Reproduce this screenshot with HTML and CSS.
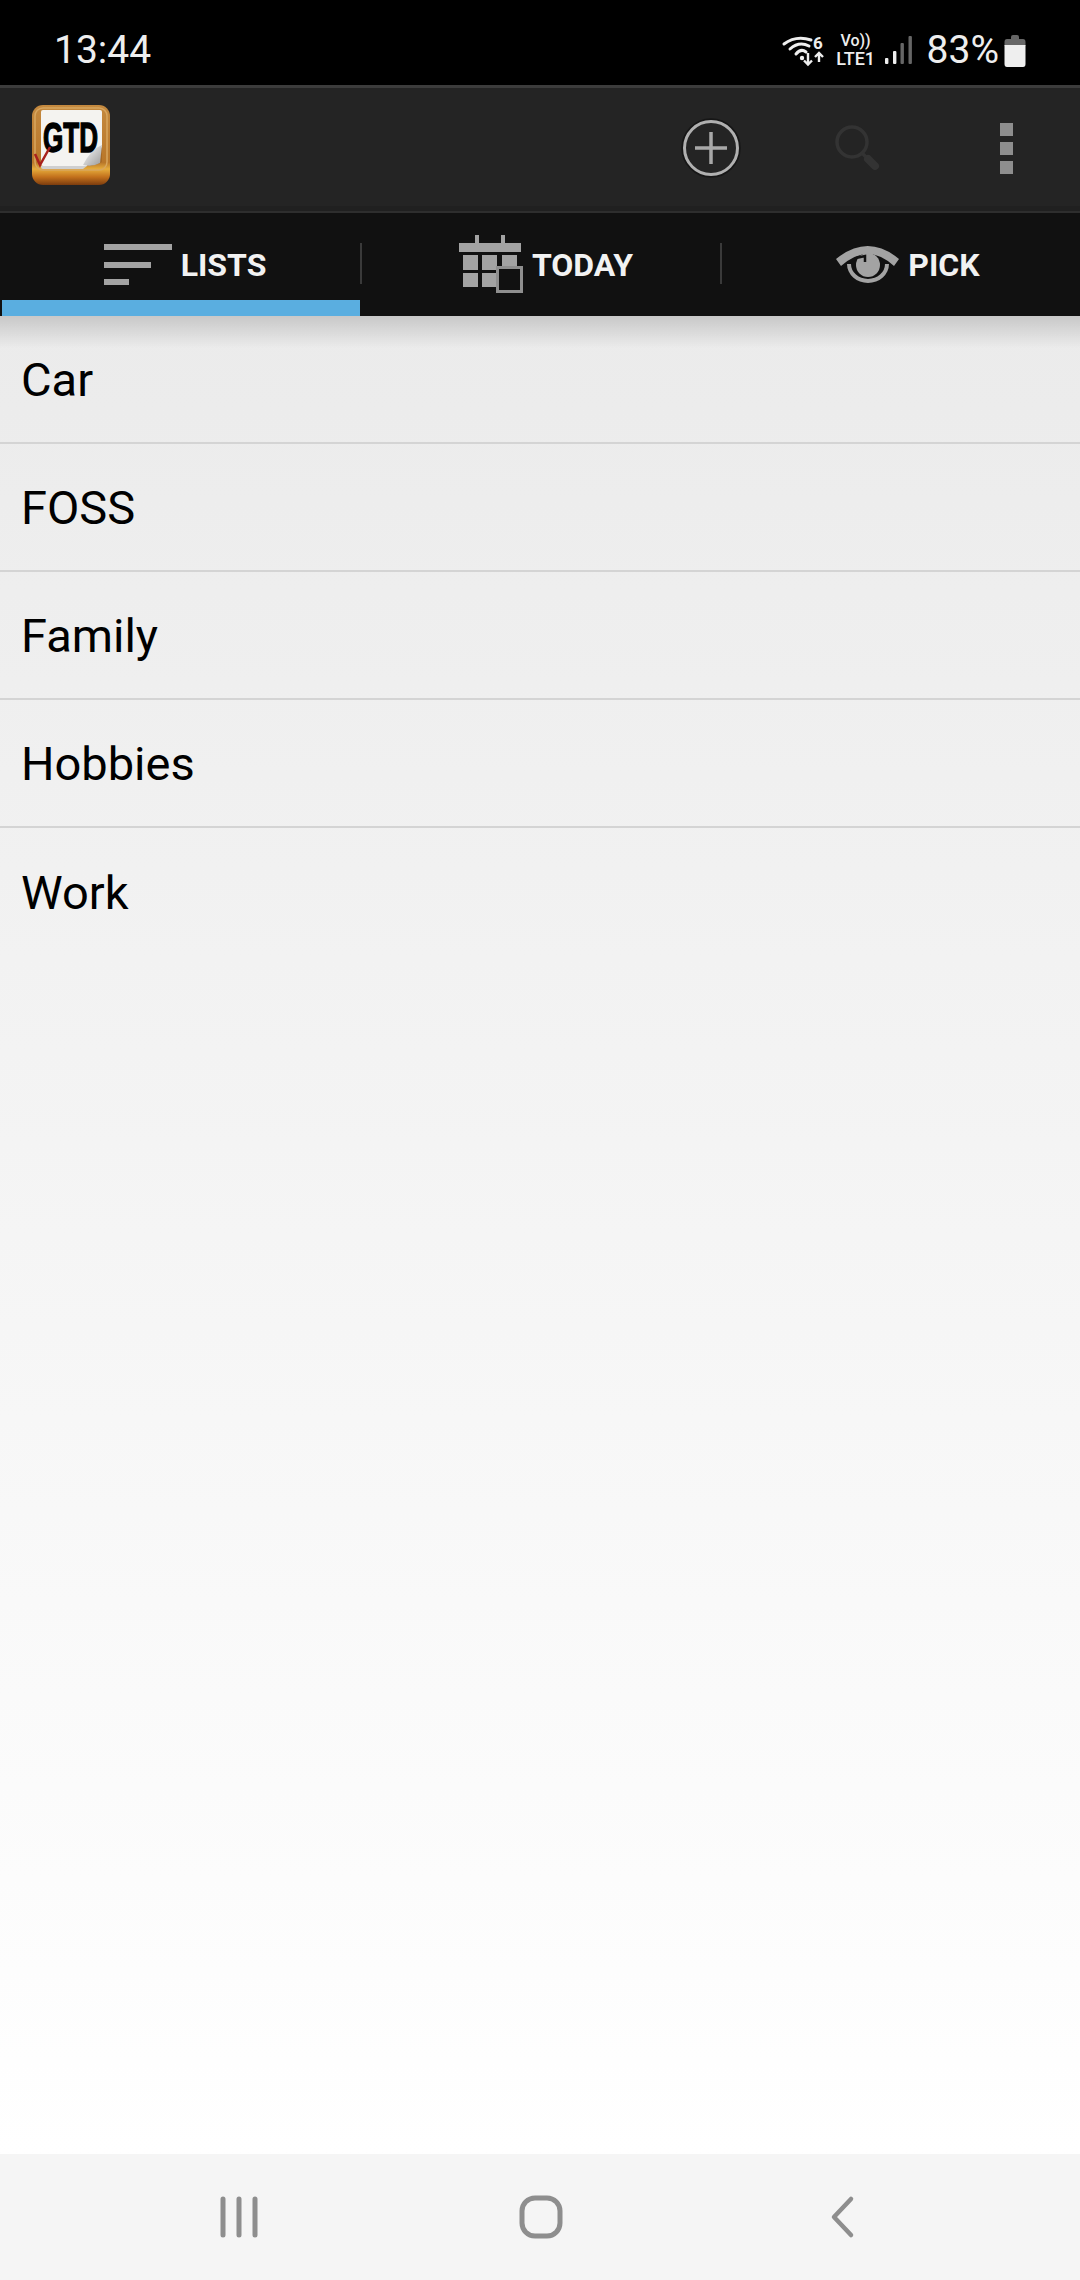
FILE: index.html
```html
<!DOCTYPE html>
<html lang="en">
<head>
    <meta charset="UTF-8">
    <meta name="viewport" content="width=device-width, initial-scale=1.0">
    <title>GTD Lists</title>
    <link rel="stylesheet" href="styles.css">
</head>
<body>
    <div class="status-bar">
        <span class="clock">13:44</span>
        <div class="status-icons">
            <svg class="wifi" width="42" height="31" viewBox="0 0 42 31">
                <path d="M2 9Q14 0 29 5" fill="none" stroke="#eee" stroke-width="3" stroke-linecap="round"/>
                <path d="M8 14Q17 6 27 11" fill="none" stroke="#eee" stroke-width="3" stroke-linecap="round"/>
                <path d="M14 19Q19 13 24 17" fill="none" stroke="#eee" stroke-width="3" stroke-linecap="round"/>
                <circle cx="20" cy="23" r="2.200" fill="#eee"/>
                <text x="31" y="14" class="wifi-six">6</text>
                <path d="M26 18V29M22 25.500L26 29.500L30 25.500" fill="none" stroke="#eee" stroke-width="2.400"/>
                <path d="M37 27V18M33 22L37 18L41 22" fill="none" stroke="#eee" stroke-width="2.400"/>
            </svg>
            <div class="volte">
                <span class="vo">Vo))</span>
                <span class="lte">LTE1</span>
            </div>
            <svg class="signal" width="29" height="30" viewBox="0 0 29 30">
                <rect x="1" y="23" width="3.400" height="6" rx="1" fill="#eee"/>
                <rect x="9" y="16" width="3.400" height="13" rx="1" fill="#eee"/>
                <rect x="16.500" y="8" width="3.400" height="21" rx="1" fill="#666"/>
                <rect x="24.500" y="1" width="3.400" height="28" rx="1" fill="#666"/>
            </svg>
            <span class="battery-text">83%</span>
            <svg class="battery" width="22" height="33" viewBox="0 0 22 33">
                <path d="M7 3Q7 1 9 1H13Q15 1 15 3V5H19Q21.500 5 21.500 8V12H0.500V8Q0.500 5 3 5H7Z" fill="#666"/>
                <path d="M0.500 11H21.500V30Q21.500 33 19 33H3Q0.500 33 0.500 30Z" fill="#eee"/>
            </svg>
        </div>
    </div>

    <div class="app-bar">
        <svg class="logo" width="80" height="82" viewBox="0 0 80 82">
            <defs>
                <linearGradient id="wood" x1="0" y1="0" x2="0" y2="1">
                    <stop offset="0" stop-color="#c4893f"/>
                    <stop offset="0.72" stop-color="#b9772a"/>
                    <stop offset="0.8" stop-color="#e6ad3c"/>
                    <stop offset="0.9" stop-color="#c2701c"/>
                    <stop offset="1" stop-color="#7c3c0e"/>
                </linearGradient>
                <linearGradient id="curl" x1="0" y1="0" x2="1" y2="1">
                    <stop offset="0" stop-color="#fff"/>
                    <stop offset="1" stop-color="#9a9a9a"/>
                </linearGradient>
            </defs>
            <rect x="1" y="0" width="78" height="80" rx="11" fill="url(#wood)"/>
            <rect x="4" y="3" width="72" height="62" rx="8" fill="none" stroke="#d8a65f" stroke-width="1.500"/>
            <path d="M10 7Q10 5 12 5H69Q71 5 71 7V42L56 61H12Q10 61 10 59Z" fill="#f4f3f0"/>
            <path d="M10 61H56L52 64H12Q10 64 10 62Z" fill="#cfcfcf"/>
            <path d="M71 42L56 61Q66 60 71 57Z" fill="#a86a24"/>
            <path d="M71 40Q60 44 52 60Q62 62 69 58Z" fill="url(#curl)"/>
            <text transform="translate(39.500 47) scale(0.62 1)" class="logo-text">GTD</text>
            <path d="M4 49L9 60L19 42" fill="none" stroke="#a8201c" stroke-width="2.500"/>
        </svg>
        <div class="actions">
            <svg width="60" height="60" viewBox="0 0 60 60">
                <circle cx="30" cy="30" r="28.500" fill="none" stroke="#161616" stroke-width="2.500"/>
                <circle cx="30" cy="30" r="26.500" fill="none" stroke="#b0b0b0" stroke-width="3"/>
                <path d="M30 14V46M14 30H46" stroke="#a8a8a8" stroke-width="3.500"/>
            </svg>
            <svg class="search" width="56" height="56" viewBox="0 0 56 56">
                <circle cx="21" cy="20" r="15" fill="none" stroke="#333" stroke-width="3.500"/>
                <path d="M31 31L36 36" stroke="#333" stroke-width="3.500"/>
                <path d="M37 37L44 44" stroke="#333" stroke-width="8" stroke-linecap="round"/>
            </svg>
            <div class="overflow">
                <span></span>
                <span></span>
                <span></span>
            </div>
        </div>
    </div>
    <div class="app-bar-line"></div>

    <div class="tabs">
        <div class="tab tab-lists">
            <svg width="68" height="41" viewBox="0 0 68 41">
                <rect x="0" y="0" width="68" height="6" fill="#a3a3a3"/>
                <rect x="0" y="18" width="47" height="6" fill="#a3a3a3"/>
                <rect x="0" y="35" width="25" height="6" fill="#a3a3a3"/>
            </svg>
            <span>LISTS</span>
        </div>
        <div class="tab tab-today">
            <svg width="64" height="59" viewBox="0 0 64 59">
                <rect x="0" y="8" width="62" height="9" fill="#a3a3a3"/>
                <rect x="16" y="0" width="4" height="8" fill="#a3a3a3"/>
                <rect x="42" y="0" width="4" height="8" fill="#a3a3a3"/>
                <rect x="4" y="20" width="15" height="15" fill="#a3a3a3"/>
                <rect x="23" y="20" width="15" height="15" fill="#a3a3a3"/>
                <rect x="43" y="20" width="15" height="15" fill="#a3a3a3"/>
                <rect x="4" y="38" width="15" height="14" fill="#a3a3a3"/>
                <rect x="23" y="38" width="14" height="14" fill="#a3a3a3"/>
                <rect x="38.500" y="32.500" width="24" height="24" fill="#111" stroke="#8f8f8f" stroke-width="3"/>
            </svg>
            <span>TODAY</span>
        </div>
        <div class="tab tab-pick">
            <svg width="64" height="40" viewBox="0 0 64 40">
                <path d="M0 14Q32 -12 63 14L58 21Q32 -3 5 21Z" fill="#a3a3a3"/>
                <path d="M11 19A21 19 0 0 0 53 19L49 19A17 15 0 0 1 15 19Z" fill="#a3a3a3"/>
                <circle cx="32" cy="20" r="12" fill="#a3a3a3"/>
                <path d="M20 13L29 11L29 17" fill="none" stroke="#111" stroke-width="2.500"/>
            </svg>
            <span>PICK</span>
        </div>
    </div>

    <div class="list">
        <div class="list-item">Car</div>
        <div class="list-item">FOSS</div>
        <div class="list-item">Family</div>
        <div class="list-item">Hobbies</div>
        <div class="list-item no-line">Work</div>
    </div>

    <div class="nav-bar">
        <svg width="42" height="44" viewBox="0 0 42 44">
            <path d="M5 4V40M21 4V40M37 4V40" stroke="#8e8e8e" stroke-width="5" stroke-linecap="round"/>
        </svg>
        <svg width="44" height="44" viewBox="0 0 44 44">
            <rect x="3" y="3" width="38" height="38" rx="13" fill="none" stroke="#8e8e8e" stroke-width="5"/>
        </svg>
        <svg width="28" height="44" viewBox="0 0 28 44">
            <path d="M23 4L6 22L23 40" fill="none" stroke="#8e8e8e" stroke-width="4.500" stroke-linecap="round" stroke-linejoin="round"/>
        </svg>
    </div>
</body>
</html>
```

FILE: styles.css
```css
* {
    box-sizing: border-box;
}
html, body {
    margin: 0;
    padding: 0;
}
body {
    width: 1080px;
    height: 2280px;
    display: flex;
    flex-direction: column;
    overflow: hidden;
    font-family: Roboto, "Liberation Sans", sans-serif;
    background-color: #fff;
}
svg {
    display: block;
    flex-shrink: 0;
}

/* status bar */
.status-bar {
    height: 85px;
    flex-shrink: 0;
    display: flex;
    align-items: center;
    justify-content: space-between;
    padding: 15px 54px 0 54px;
    background-color: #000;
    color: #eee;
}
.clock {
    font-size: 39px;
}
.status-icons {
    display: flex;
    align-items: center;
}
.wifi {
    overflow: visible;
}
.wifi-six {
    font-size: 17px;
    font-weight: 700;
    fill: #eee;
}
.volte {
    display: flex;
    flex-direction: column;
    align-items: center;
    width: 40px;
    margin-left: 12px;
}
.vo {
    font-size: 16px;
    line-height: 17px;
    font-weight: 500;
}
.lte {
    font-size: 18px;
    line-height: 19px;
    font-weight: 500;
}
.signal {
    margin-left: 8px;
}
.battery-text {
    font-size: 39px;
    margin-left: 14px;
}
.battery {
    margin-left: 5px;
}

/* app bar */
.app-bar {
    height: 126px;
    flex-shrink: 0;
    display: flex;
    align-items: center;
    justify-content: space-between;
    padding: 0 0 3px 31px;
    border-top: 3px solid #3c3c3c;
    background: linear-gradient(#242424 96%, #202020 96%);
}
.logo {
    margin-bottom: 4px;
}
.actions {
    display: flex;
    align-items: center;
}
.search {
    margin: 4px 0 0 90px;
}
.overflow {
    display: flex;
    flex-direction: column;
    gap: 6px;
    margin: 0 67px 0 113px;
}
.overflow span {
    display: block;
    width: 13px;
    height: 13px;
    background-color: #8e8e8e;
}
.logo-text {
    font-family: "Liberation Sans", sans-serif;
    font-size: 42px;
    font-weight: 700;
    text-anchor: middle;
    fill: #000;
    stroke: #000;
    stroke-width: 1.500px;
}
.app-bar-line {
    height: 2px;
    flex-shrink: 0;
    background-color: #2e2e2e;
}

/* tabs */
.tabs {
    height: 103px;
    flex-shrink: 0;
    display: flex;
    background-color: #111;
    padding-left: 2px;
}
.tab {
    position: relative;
    display: flex;
    align-items: center;
    justify-content: center;
    gap: 9px;
    padding-left: 8px;
    color: #f2f2f2;
    font-size: 32px;
    font-weight: 700;
}
.tab-lists {
    width: 358px;
}
.tab-lists::after {
    content: "";
    position: absolute;
    left: 0;
    right: 0;
    bottom: 0;
    height: 16px;
    background-color: #5aaee0;
}
.tab-today {
    width: 362px;
    padding-left: 10px;
}
.tab-pick {
    width: 358px;
    gap: 8px;
    padding-left: 14px;
}
.tab-today::before,
.tab-today::after {
    content: "";
    position: absolute;
    top: 30px;
    width: 2px;
    height: 41px;
    background-color: #3a3a3a;
}
.tab-today::before {
    left: 0;
}
.tab-today::after {
    right: 0;
}

/* list */
.list {
    flex: 1;
    position: relative;
    background: linear-gradient(#ebebeb, #fff);
}
.list::before {
    content: "";
    position: absolute;
    top: 0;
    left: 0;
    right: 0;
    height: 32px;
    background: linear-gradient(rgba(0, 0, 0, 0.15), rgba(0, 0, 0, 0));
}
.list-item {
    height: 128px;
    display: flex;
    align-items: center;
    padding: 1px 0 0 21px;
    border-bottom: 2px solid #d4d4d4;
    font-size: 47px;
    color: #000;
}
.list-item.no-line {
    border-bottom: none;
}

/* bottom nav */
.nav-bar {
    height: 126px;
    flex-shrink: 0;
    display: flex;
    align-items: center;
    padding-left: 218px;
    background-color: #f5f5f5;
}
.nav-bar svg:nth-child(2) {
    margin-left: 259px;
}
.nav-bar svg:nth-child(3) {
    margin-left: 265px;
}
```
